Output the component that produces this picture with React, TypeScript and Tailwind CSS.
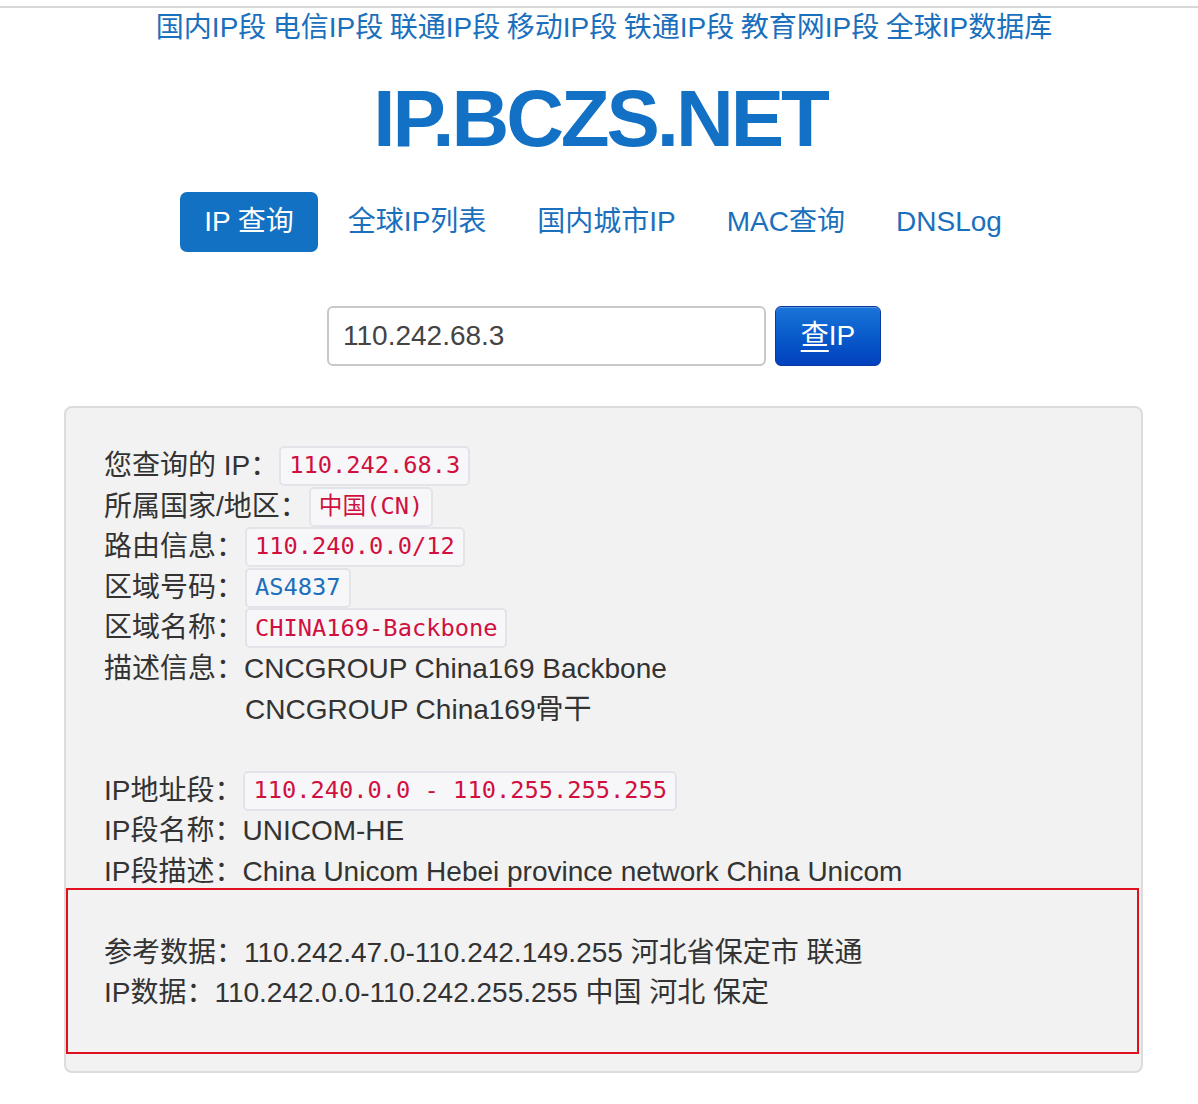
import React from "react";

const font = { fontFamily: '"Liberation Sans", "Noto Sans CJK SC", sans-serif' };

function Code({ children, blue }: { children: React.ReactNode; blue?: boolean }) {
  return (
    <span
      className={`inline-flex items-center h-[40px] px-[8px] border-2 border-[#e3e3ea] bg-[#f7f7f9] rounded-[5px] text-[23.7px] ml-[1px] ${blue ? "text-[#1c70bb]" : "text-[#d01040]"}`}
      style={{ fontFamily: '"DejaVu Sans Mono", "Noto Sans CJK SC", monospace' }}
    >
      {children}
    </span>
  );
}

function Row({ children, className = "" }: { children?: React.ReactNode; className?: string }) {
  return <div className={`flex items-center h-[40.6px] whitespace-nowrap ${className}`}>{children}</div>;
}

export default function App() {
  const links = ["国内IP段", "电信IP段", "联通IP段", "移动IP段", "铁通IP段", "教育网IP段", "全球IP数据库"];
  const nav = ["全球IP列表", "国内城市IP", "MAC查询", "DNSLog"];
  return (
    <div className="bg-white min-h-[1104px] text-[#333]" style={font}>
      <div className="h-[6px]" />
      <div className="h-[2px] bg-[#d8d8d8]" />
      <div className="pl-[8px]">
        <div className="flex justify-center h-[40px] items-center text-[28px] text-[#1a70bd] gap-[6.5px] pl-[2px]">
          {links.map((l) => (
            <span key={l}>{l}</span>
          ))}
        </div>
        <div
          className="mt-[31px] h-[80px] leading-[80px] text-center text-[80px] font-bold text-[#1271c4] tracking-[-3.1px] pr-[6px]"
          style={{ fontFamily: '"Liberation Sans", Arial, sans-serif' }}
        >
          IP.BCZS.NET
        </div>
        <div className="mt-[33px] flex justify-center gap-[3px] text-[28px]">
          <span className="h-[60px] flex items-center px-[24px] rounded-[7px] bg-[#1271c2] text-white mr-[3px]">IP 查询</span>
          {nav.map((n) => (
            <span key={n} className="h-[60px] flex items-center px-[24px] text-[#1a70bd]">
              {n}
            </span>
          ))}
        </div>
        <div className="mt-[54px] flex justify-center gap-[9px] pl-[2px]">
          <div className="w-[439px] h-[60px] border-2 border-[#c9c9c9] rounded-[6px] flex items-center pl-[14px] text-[28px] text-[#444] bg-white">
            110.242.68.3
          </div>
          <div className="w-[106px] h-[60px] rounded-[6px] border border-[#0a3aa0] bg-gradient-to-b from-[#1a74d8] to-[#0340bd] flex items-center justify-center text-white text-[28px] shadow-[inset_0_1px_0_rgba(255,255,255,0.25)]">
            <span className="underline underline-offset-[5px] decoration-[2px]">查</span>IP
          </div>
        </div>
      </div>
      <div className="mt-[40px] ml-[64px] w-[1079px] border-2 border-[#dcdcdc] rounded-[8px] bg-[#f2f2f2] pb-[17px] text-[28px] text-[#333]">
        <div className="pl-[38px] pt-[37.7px]">
          <Row>
            您查询的 IP：<Code>110.242.68.3</Code>
          </Row>
          <Row>
            所属国家/地区：<Code>中国(CN)</Code>
          </Row>
          <Row>
            路由信息：<Code>110.240.0.0/12</Code>
          </Row>
          <Row>
            区域号码：<Code blue>AS4837</Code>
          </Row>
          <Row>
            区域名称：<Code>CHINA169-Backbone</Code>
          </Row>
          <Row>描述信息：CNCGROUP China169 Backbone</Row>
          <Row className="pl-[141px]">CNCGROUP China169骨干</Row>
          <Row />
          <Row>
            IP地址段：<Code>110.240.0.0 - 110.255.255.255</Code>
          </Row>
          <Row>IP段名称：UNICOM-HE</Row>
          <Row>IP段描述：China Unicom Hebei province network China Unicom</Row>
        </div>
        <div className="mt-[-4px] mr-[2px] border-2 border-[#e0101e] pl-[36px] pt-[43px] pb-[39px]">
          <div className="flex items-center h-[40px] whitespace-nowrap">参考数据：110.242.47.0-110.242.149.255 河北省保定市 联通</div>
          <div className="flex items-center h-[40px] whitespace-nowrap">IP数据：110.242.0.0-110.242.255.255 中国 河北 保定</div>
        </div>
      </div>
    </div>
  );
}
